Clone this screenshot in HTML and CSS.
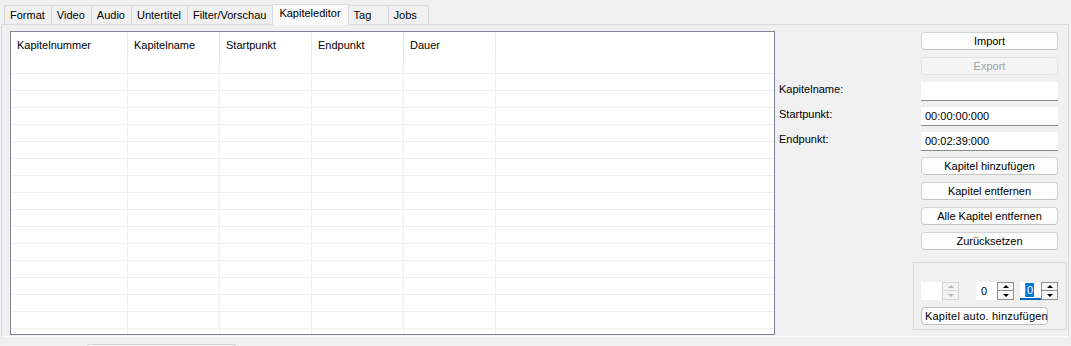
FILE: index.html
```html
<!DOCTYPE html>
<html lang="de">
<head>
  <meta charset="UTF-8" />
  <title>Kapiteleditor</title>
  <link rel="stylesheet" href="styles.css">
</head>
<body>
  <div class="tabs">
    <div class="tab">Format</div>
    <div class="tab">Video</div>
    <div class="tab">Audio</div>
    <div class="tab">Untertitel</div>
    <div class="tab">Filter/Vorschau</div>
    <div class="tab active">Kapiteleditor</div>
    <div class="tab">Tag</div>
    <div class="tab">Jobs</div>
  </div>

  <div class="pane">
    <div class="chapters">
      <div class="head">
        <div class="hcell">Kapitelnummer</div>
        <div class="hcell">Kapitelname</div>
        <div class="hcell">Startpunkt</div>
        <div class="hcell">Endpunkt</div>
        <div class="hcell">Dauer</div>
        <div class="hcell last"></div>
      </div>
      <div id="rows"></div>
    </div>

    <div class="side">
      <div class="field"><button class="btn">Import</button></div>
      <div class="field"><button class="btn" disabled>Export</button></div>
      <div class="field">
        <label>Kapitelname:</label>
        <input type="text" class="edit" value="" />
      </div>
      <div class="field">
        <label>Startpunkt:</label>
        <input type="text" class="edit" value="00:00:00:000" />
      </div>
      <div class="field">
        <label>Endpunkt:</label>
        <input type="text" class="edit" value="00:02:39:000" />
      </div>
      <div class="field"><button class="btn">Kapitel hinzufügen</button></div>
      <div class="field"><button class="btn">Kapitel entfernen</button></div>
      <div class="field"><button class="btn">Alle Kapitel entfernen</button></div>
      <div class="field"><button class="btn">Zurücksetzen</button></div>

      <div class="group">
        <div class="spins">
          <div class="spin disabled">
            <div class="spin-text"></div>
            <div class="spin-btns"><span class="up"></span><span class="down"></span></div>
          </div>
          <div class="spin second">
            <div class="spin-text">0</div>
            <div class="spin-btns"><span class="up"></span><span class="down"></span></div>
          </div>
          <div class="spin focus">
            <div class="spin-text"><span class="sel">0</span></div>
            <div class="spin-btns"><span class="up"></span><span class="down"></span></div>
          </div>
        </div>
        <button class="btn auto">Kapitel auto. hinzufügen</button>
      </div>
    </div>
  </div>

  <div class="below"></div>

  <script>
    // empty chapter rows
    const rows = document.getElementById('rows');
    for (let i = 0; i < 17; i++) {
      const row = document.createElement('div');
      row.className = 'row';
      for (let c = 0; c < 6; c++) {
        const cell = document.createElement('div');
        cell.className = c === 5 ? 'cell last' : 'cell';
        row.appendChild(cell);
      }
      rows.appendChild(row);
    }
  </script>
</body>
</html>
```

FILE: styles.css
```css
* {
  box-sizing: border-box;
  font-family: 'Liberation Sans', Arial, sans-serif;
}

body {
  margin: 0;
  height: 346px;
  overflow: hidden;
  background: #f0f0f0;
  font-size: 11px;
  color: #000;
}

/* tab bar */
.tabs {
  display: flex;
  align-items: flex-end;
  height: 24px;
  padding: 4px 0 0 4px;
}

.tab {
  height: 19px;
  line-height: 19px;
  min-width: 41px;
  padding: 0 6px 0 5px;
  background: #f0f0f0;
  border: 1px solid #dadada;
  border-bottom: none;
  margin-right: -1px;
  white-space: nowrap;
}

.tab.active {
  position: relative;
  z-index: 1;
  height: 21px;
  line-height: 17px;
  margin-bottom: -1px;
  padding: 0 7px 0 6px;
  background: #f9f9f9;
}

/* tab pane */
.pane {
  display: flex;
  width: 1068px;
  height: 313px;
  margin-left: 1px;
  padding: 6px 0 1px 8px;
  border: 1px solid #dadada;
  border-bottom-color: #fbfbfb;
}

.chapters {
  width: 765px;
  height: 304px;
  flex-shrink: 0;
  background: #fff;
  border: 1px solid #7f8590;
  overflow: hidden;
}

.head,
.row {
  display: grid;
  grid-template-columns: 117px 92px 92px 92px 92px 1fr;
}

.head {
  height: 25px;
}

.hcell {
  line-height: 24px;
  padding-left: 6px;
  border-right: 1px solid #e6e6e6;
  margin-top: 1px;
}

.row {
  height: 17px;
  border-bottom: 1px solid #efefef;
}

.cell {
  border-right: 1px solid #efefef;
}

.hcell.last,
.cell.last {
  border-right: none;
}

/* right side */
.side {
  flex: 1;
  display: flex;
  flex-direction: column;
  align-items: flex-end;
  padding-top: 1px;
}

.field {
  display: flex;
  justify-content: space-between;
  align-items: flex-start;
  width: 100%;
  height: 25px;
  padding: 0 10px 0 4px;
}

.field .btn {
  margin-left: auto;
}

.field label {
  line-height: 12px;
  padding-top: 1px;
}

.btn {
  width: 137px;
  height: 18px;
  padding: 0;
  font-size: 11px;
  color: #000;
  background: #fdfdfd;
  border: 1px solid #d3d3d3;
  border-bottom-color: #c4c4c4;
  border-radius: 4px;
  white-space: nowrap;
}

.btn:disabled {
  color: #a0a0a0;
  background: #f5f5f5;
  border-color: #e3e3e3;
}

.edit {
  width: 137px;
  height: 19px;
  padding: 0 4px;
  font-size: 11px;
  color: #000;
  background: #fff;
  border: none;
  border-bottom: 1px solid #8a8a8a;
  outline: none;
}

/* auto chapter group */
.group {
  width: 154px;
  height: 68px;
  margin: 5px 1px 0 0;
  padding: 19px 0 0 7px;
  border: 1px solid #dcdcdc;
}

.spins {
  display: flex;
  height: 18px;
}

.spin {
  display: flex;
  width: 38px;
  height: 18px;
}

.spin.second {
  margin-left: 17px;
}

.spin.focus {
  margin-left: 6px;
}

.spin-text {
  width: 21px;
  height: 18px;
  line-height: 18px;
  padding-left: 5px;
  background: #fff;
}

.spin.focus .spin-text {
  border-bottom: 2px solid #0067c0;
  line-height: 17px;
}

.sel {
  display: inline-block;
  line-height: 14px;
  padding: 0 1px;
  background: #0078d7;
  color: #fff;
  border-left: 1px solid #e07000;
}

.spin-btns {
  display: flex;
  flex-direction: column;
  width: 17px;
  background: #f0f0f0;
}

.spin-btns span {
  display: flex;
  align-items: center;
  justify-content: center;
  height: 9px;
  border: 1px solid #8e8e8e;
  background: #f7f7f7;
}

.spin-btns .down {
  border-top: none;
}

.spin-btns .up::before,
.spin-btns .down::before {
  content: '';
  border-left: 3px solid transparent;
  border-right: 3px solid transparent;
}

.spin-btns .up::before {
  border-bottom: 3px solid #000;
}

.spin-btns .down::before {
  border-top: 3px solid #000;
}

.spin.disabled .spin-btns span {
  border-color: #d6d6d6;
  background: #f3f3f3;
}

.spin.disabled .up::before {
  border-bottom-color: #b5b5b5;
}

.spin.disabled .down::before {
  border-top-color: #b5b5b5;
}

.btn.auto {
  display: block;
  width: 127px;
  margin-top: 7px;
  padding: 0 0 0 3px;
  text-align: left;
  letter-spacing: 0.2px;
  border-color: #bdbdbd;
}

/* widget below the tabs */
.below {
  width: 149px;
  height: 4px;
  margin: 7px 0 0 87px;
  background: #fff;
  border: 1px solid #cdcdcd;
  border-radius: 3px 3px 0 0;
}
```
